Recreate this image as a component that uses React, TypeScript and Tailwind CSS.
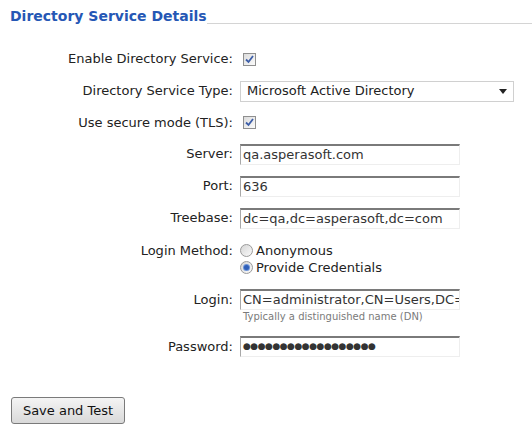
import React from 'react';

const Check = () => (
  <span className="flex h-[13px] w-[13px] items-center justify-center border border-[#8f8f8f] bg-gradient-to-br from-[#dcdcdc] to-[#fbfbfb]">
    <svg width="9" height="9" viewBox="0 0 9 9">
      <path d="M1 4.5 L3.5 7 L8 1" fill="none" stroke="#3d5ea8" strokeWidth="1.8" />
    </svg>
  </span>
);

const Radio = ({ on }: { on?: boolean }) => (
  <span className="flex h-[13px] w-[13px] items-center justify-center rounded-full border border-[#9a9a9a] bg-gradient-to-br from-[#d6d6d6] to-[#fafafa]">
    {on && <span className="h-[5px] w-[5px] rounded-full bg-[#2f5fb8] ring-1 ring-[#6d94d8]" />}
  </span>
);

const Field = ({ value, dots }: { value: string; dots?: boolean }) => (
  <div className="flex h-[21px] w-[220px] items-center overflow-hidden whitespace-nowrap border-t-2 border-l border-r border-b border-t-[#7a7a7a] border-l-[#a8a8a8] border-r-[#eeeeee] border-b-[#eeeeee] pl-[2px] text-[#333]">
    <span className={dots ? 'text-[9px] tracking-[-0.5px] text-[#333]' : ''}>{value}</span>
  </div>
);

const Row = ({ label, children, h = 'h-[32px]' }: { label: string; children: React.ReactNode; h?: string }) => (
  <div className={`grid grid-cols-[233px_1fr] items-center gap-x-[7px] ${h}`}>
    <div className="text-right">{label}</div>
    <div className="flex items-center">{children}</div>
  </div>
);

export default function App() {
  return (
    <div
      className="h-[442px] w-[532px] bg-white text-[13px] text-[#222]"
      style={{ fontFamily: '"DejaVu Sans", Verdana, sans-serif' }}
    >
      <div className="flex items-end pl-[10px] pt-[8px]">
        <h2 className="text-[14px] font-bold leading-[17px] text-[#2557b5]">Directory Service Details</h2>
        <div className="mb-[1px] flex-1 border-b border-[#d4d4d4]" />
      </div>

      <div className="mt-[18px]">
        <Row label="Enable Directory Service:">
          <span className="ml-[3px]"><Check /></span>
        </Row>
        <Row label="Directory Service Type:">
          <div className="flex h-[21px] w-[274px] items-center justify-between border border-[#d0d0d0] bg-white pl-[6px] pr-[6px]">
            <span>Microsoft Active Directory</span>
            <svg width="8" height="5" viewBox="0 0 8 5">
              <path d="M0 0 H8 L4 5 Z" fill="#222" />
            </svg>
          </div>
        </Row>
        <Row label="Use secure mode (TLS):" h="h-[31px]">
          <span className="ml-[3px]"><Check /></span>
        </Row>
        <Row label="Server:">
          <Field value="qa.asperasoft.com" />
        </Row>
        <Row label="Port:">
          <Field value="636" />
        </Row>
        <Row label="Treebase:">
          <Field value="dc=qa,dc=asperasoft,dc=com" />
        </Row>

        <div className="mt-[8px] grid grid-cols-[233px_1fr] gap-x-[7px] leading-[17px]">
          <div className="text-right">Login Method:</div>
          <div className="flex flex-col">
            <label className="flex items-center gap-[3px]"><Radio /> Anonymous</label>
            <label className="flex items-center gap-[3px]"><Radio on /> Provide Credentials</label>
          </div>
        </div>

        <div className="mt-[13px] grid grid-cols-[233px_1fr] gap-x-[7px]">
          <div className="flex h-[21px] items-center justify-end">Login:</div>
          <div>
            <Field value="CN=administrator,CN=Users,DC=qa,DC=asperasoft,DC=com" />
            <div className="mt-[-1px] pl-[3px] text-[10px] text-[#7a7a7a]">Typically a distinguished name (DN)</div>
          </div>
        </div>

        <div className="mt-[12px] grid grid-cols-[233px_1fr] gap-x-[7px]">
          <div className="flex h-[21px] items-center justify-end">Password:</div>
          <Field value="●●●●●●●●●●●●●●●●●●" dots />
        </div>
      </div>

      <div className="mt-[40px] pl-[11px]">
        <button className="h-[27px] w-[114px] rounded-[3px] border border-[#7a7a7a] bg-gradient-to-b from-[#f4f4f4] to-[#d9d9d9] text-[13px] text-[#111]">
          Save and Test
        </button>
      </div>
    </div>
  );
}
